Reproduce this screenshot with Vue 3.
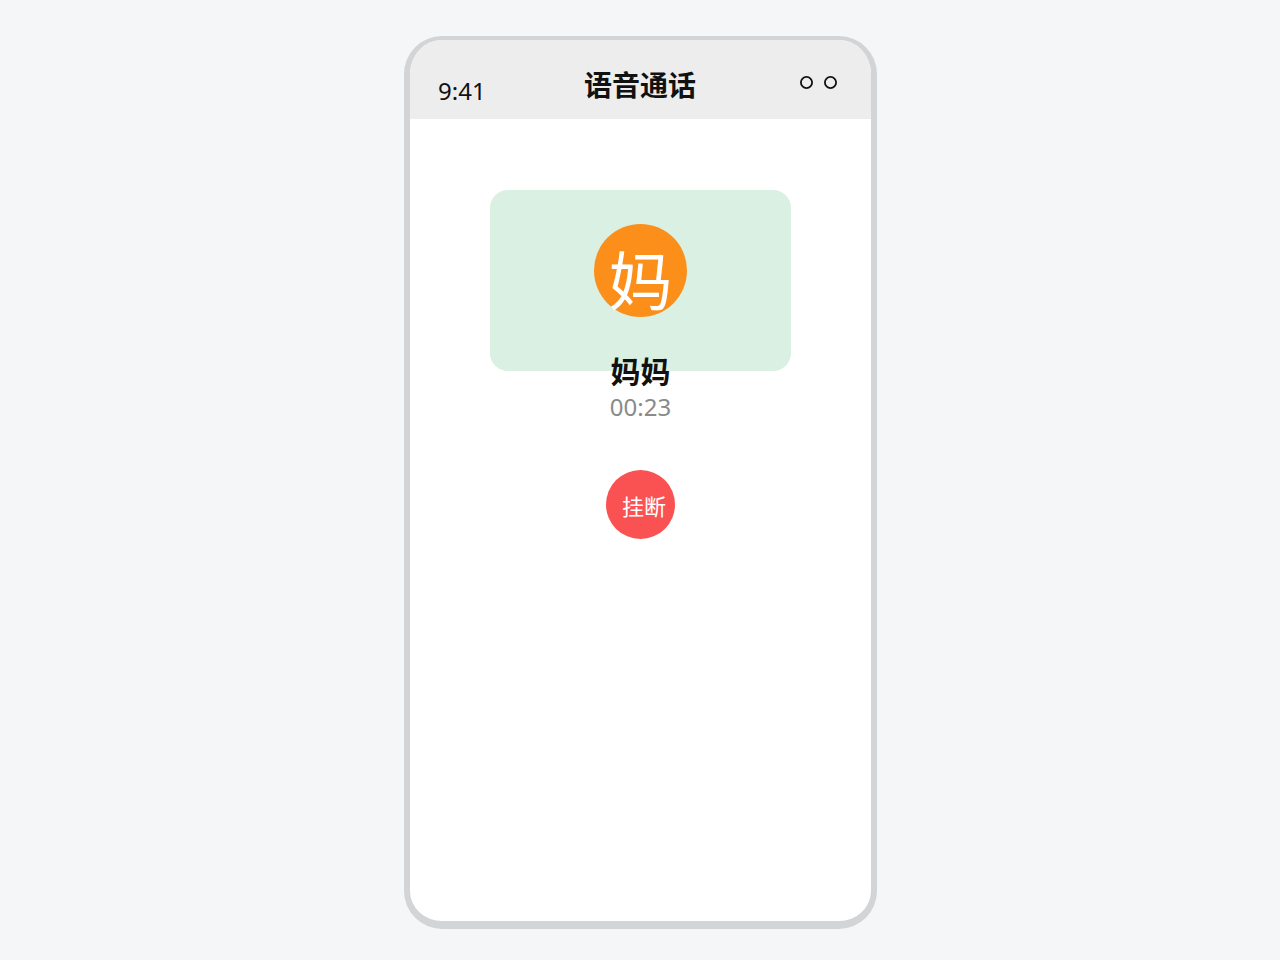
<script setup>
import { ref } from 'vue'

const contact = ref('妈妈')
const duration = ref('00:23')
</script>

<template>
  <div class="stage">
    <div class="phone">
      <header class="bar">
        <time class="clock">9:41</time>
        <h1 class="title">语音通话</h1>
        <svg class="status" width="37" height="13" viewBox="0 0 37 13" aria-hidden="true">
          <circle cx="6.5" cy="6.5" r="5.6" />
          <circle cx="30.5" cy="6.5" r="5.6" />
        </svg>
      </header>
      <main class="call">
        <section class="card">
          <div class="avatar"><span>{{ contact[0] }}</span></div>
        </section>
        <h2 class="name">{{ contact }}</h2>
        <p class="duration">{{ duration }}</p>
        <button class="hangup" type="button">挂断</button>
      </main>
    </div>
  </div>
</template>

<style>
body {
  background: #f4f6f8;
}
</style>

<style scoped>
.stage {
  box-sizing: border-box;
  min-height: 100vh;
  padding: 36px 16px 31px 17px;
  display: flex;
  justify-content: center;
  background: #f4f6f8;
  color: #111;
  font-family: "Noto Sans", "Noto Sans CJK SC", sans-serif;
}

.phone {
  box-sizing: border-box;
  width: 100%;
  max-width: 473px;
  display: flex;
  flex-direction: column;
  border: solid #d2d4d6;
  border-width: 4px 6px 8px;
  border-radius: 38px;
  background: #fff;
  overflow: hidden;
}

.bar {
  box-sizing: border-box;
  height: 79px;
  padding: 0 34px 0 28px;
  display: grid;
  grid-template-columns: 1fr auto 1fr;
  align-items: start;
  background: #ededed;
}

.clock {
  padding-top: 35px;
  font-size: 24px;
  line-height: 32px;
}

.title {
  margin: 0 0 0 5px;
  padding-top: 25px;
  font-size: 28px;
  line-height: 40px;
  font-weight: 700;
}

.status {
  margin-top: 36px;
  justify-self: end;
  fill: none;
  stroke: #111;
  stroke-width: 1.8;
}

.call {
  padding: 71px 24px 24px;
  display: flex;
  flex-direction: column;
  align-items: center;
}

.card {
  box-sizing: border-box;
  width: 100%;
  max-width: 301px;
  height: 181px;
  padding-top: 34px;
  display: flex;
  justify-content: center;
  align-items: flex-start;
  border-radius: 18px;
  background: #d9f0e3;
}

.avatar {
  box-sizing: border-box;
  width: 93px;
  height: 93px;
  padding-top: 23px;
  border-radius: 50%;
  background: #fc8f19;
  color: #fff;
  font-size: 64px;
  line-height: 68px;
  text-align: center;
}

.name {
  margin: -19px 0 0;
  font-size: 30px;
  line-height: 40px;
  font-weight: 700;
}

.duration {
  margin: -1px 0 0;
  color: #8a8a8a;
  font-size: 24px;
  line-height: 32px;
}

.hangup {
  box-sizing: border-box;
  width: 69px;
  height: 69px;
  margin-top: 47px;
  padding: 2px 0 0 7px;
  border: 0;
  border-radius: 50%;
  background: #fa5252;
  color: #fff;
  font-family: inherit;
  font-size: 22px;
  line-height: 32px;
  white-space: nowrap;
  cursor: pointer;
}
</style>
